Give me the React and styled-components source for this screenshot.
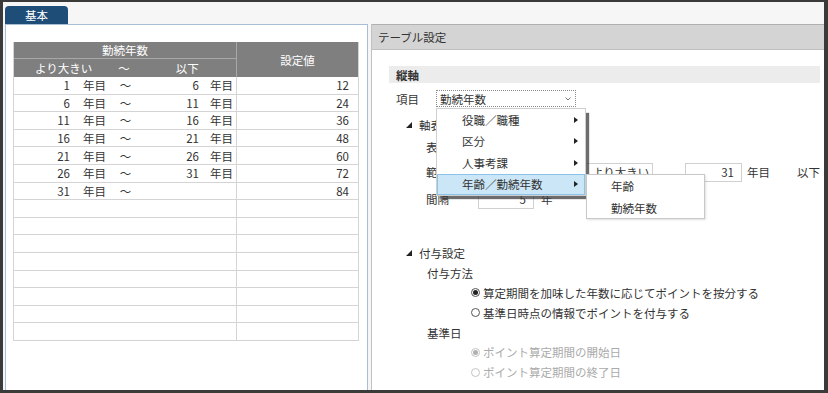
import React from 'react';
import styled, { createGlobalStyle } from 'styled-components';

const GlobalStyle = createGlobalStyle`
  html, body {
    margin: 0;
    padding: 0;
    background: #3a3a3a;
  }
  body {
    font-family: "Noto Sans CJK JP", "Noto Sans", sans-serif;
    font-size: 11.5px;
    color: #333;
  }
  * {
    box-sizing: border-box;
  }
`;

const tableRows = [
  { from: 1, to: 6, value: 12 },
  { from: 6, to: 11, value: 24 },
  { from: 11, to: 16, value: 36 },
  { from: 16, to: 21, value: 48 },
  { from: 21, to: 26, value: 60 },
  { from: 26, to: 31, value: 72 },
  { from: 31, to: null, value: 84 },
];
const EMPTY_ROWS = 8;

const menuItems = ['役職／職種', '区分', '人事考課', '年齢／勤続年数'];
const subItems = ['年齢', '勤続年数'];

const TreeMark = () => (
  <svg width="6" height="6" viewBox="0 0 6 6">
    <polygon points="6,0 6,6 0,6" fill="#222" />
  </svg>
);

const ArrowRight = () => (
  <svg width="4" height="6" viewBox="0 0 4 6">
    <polygon points="0,0 4,3 0,6" fill="#222" />
  </svg>
);

const Chevron = () => (
  <svg width="6" height="4" viewBox="0 0 6 4">
    <polyline points="0.5,0.5 3,3 5.5,0.5" fill="none" stroke="#777" strokeWidth="1" />
  </svg>
);

const App = () => {
  return (
    <>
      <GlobalStyle />
      <Frame>
        <TabStrip>
          <Tab>基本</Tab>
        </TabStrip>
        <Main>
          <LeftPanel>
            <Grid>
              <HeadTop>勤続年数</HeadTop>
              <HeadValue>設定値</HeadValue>
              <HeadSub>
                <SubLabel $ml={21}>より大きい</SubLabel>
                <SubLabel $ml={26}>～</SubLabel>
                <SubLabel $ml={46}>以下</SubLabel>
              </HeadSub>
              {tableRows.map((r, i) => (
                <React.Fragment key={i}>
                  <RangeCell>
                    <Num $w={56}>{r.from}</Num>
                    <Unit $ml={13}>年目</Unit>
                    <Tilde>～</Tilde>
                    {r.to !== null && (
                      <>
                        <Num $w={67}>{r.to}</Num>
                        <Unit $ml={11}>年目</Unit>
                      </>
                    )}
                  </RangeCell>
                  <ValueCell>{r.value}</ValueCell>
                </React.Fragment>
              ))}
              {Array.from({ length: EMPTY_ROWS }).map((_, i) => (
                <React.Fragment key={'e' + i}>
                  <RangeCell />
                  <ValueCell />
                </React.Fragment>
              ))}
            </Grid>
          </LeftPanel>

          <RightPanel>
            <PanelHeader>テーブル設定</PanelHeader>
            <Content>
              <SectionBar>縦軸</SectionBar>

              <Row $mt={7} $h={17} $indent={7}>
                <FieldLabel $w={40}>項目</FieldLabel>
                <SelectWrap>
                  <SelectBox>
                    <span>勤続年数</span>
                    <Chevron />
                  </SelectBox>
                  <Menu>
                    {menuItems.map((m, i) => (
                      <MenuItem key={m} $active={i === menuItems.length - 1}>
                        <span>{m}</span>
                        <ArrowRight />
                        {i === menuItems.length - 1 && (
                          <SubMenu>
                            {subItems.map(s => (
                              <SubItem key={s}>{s}</SubItem>
                            ))}
                          </SubMenu>
                        )}
                      </MenuItem>
                    ))}
                  </Menu>
                </SelectWrap>
              </Row>

              <Row $mt={8} $h={20} $indent={17}>
                <TreeMark />
                <TreeText>軸表示設定</TreeText>
              </Row>

              <Row $mt={2} $h={20} $indent={37}>
                <FieldLabel $w={52}>表示単位</FieldLabel>
              </Row>

              <Row $mt={5} $h={20} $indent={37}>
                <FieldLabel $w={52}>範囲</FieldLabel>
                <NumInput $w={56}>1</NumInput>
                <Text $ml={7}>年目</Text>
                <ChoiceBox $ml={19}>より大きい</ChoiceBox>
                <NumInput $w={57} $ml={32}>31</NumInput>
                <Text $ml={5}>年目</Text>
                <Text $ml={27}>以下</Text>
              </Row>

              <Row $mt={7} $h={20} $indent={37}>
                <FieldLabel $w={52}>間隔</FieldLabel>
                <NumInput $w={56}>5</NumInput>
                <Text $ml={7}>年</Text>
              </Row>

              <Row $mt={34} $h={20} $indent={17}>
                <TreeMark />
                <TreeText>付与設定</TreeText>
              </Row>

              <Row $h={20} $indent={38}>
                <Text>付与方法</Text>
              </Row>
              <Row $h={19.5} $indent={82}>
                <Radio $checked />
                <Text $ml={3}>算定期間を加味した年数に応じてポイントを按分する</Text>
              </Row>
              <Row $h={20} $indent={82}>
                <Radio />
                <Text $ml={3}>基準日時点の情報でポイントを付与する</Text>
              </Row>
              <Row $h={20} $indent={38}>
                <Text>基準日</Text>
              </Row>
              <Row $h={19.5} $indent={82}>
                <Radio $checked $disabled />
                <Text $ml={3} $disabled>ポイント算定期間の開始日</Text>
              </Row>
              <Row $h={20.5} $indent={82}>
                <Radio $disabled />
                <Text $ml={3} $disabled>ポイント算定期間の終了日</Text>
              </Row>
            </Content>
          </RightPanel>
        </Main>
      </Frame>
    </>
  );
};

export default App;

const Frame = styled.div`
  width: 828px;
  height: 393px;
  display: flex;
  flex-direction: column;
  background: #f6f6f6;
  border-style: solid;
  border-color: #3a3a3a;
  border-width: 2px 4px 3px 3px;
  overflow: hidden;
`;

const TabStrip = styled.div`
  height: 22px;
  display: flex;
  align-items: flex-end;
  padding-left: 2px;
`;

const Tab = styled.div`
  width: 63px;
  height: 18px;
  background: #1e4d78;
  color: #fff;
  border-radius: 4px 4px 0 0;
  display: flex;
  align-items: center;
  justify-content: center;
  font-size: 11.5px;
`;

const Main = styled.div`
  flex: 1;
  display: flex;
  gap: 3px;
  padding-left: 2px;
  min-height: 0;
`;

const LeftPanel = styled.div`
  width: 364px;
  background: #fff;
  border: 1px solid #a8bdd6;
  border-bottom: none;
  padding: 17px 0 0 7px;
`;

const Grid = styled.div`
  width: 346px;
  display: grid;
  grid-template-columns: 223px 121px;
  grid-template-rows: 17px 18px;
  grid-auto-rows: 17.6px;
  border-left: 1px solid #d4d4d4;
  border-right: 1px solid #d4d4d4;
`;

const HeadCell = styled.div`
  background: #7f7f7f;
  color: #fff;
  display: flex;
  align-items: center;
`;

const HeadTop = styled(HeadCell)`
  grid-column: 1;
  grid-row: 1;
  justify-content: center;
  border-right: 1px solid #a8a8a8;
  border-bottom: 1px solid #a8a8a8;
`;

const HeadValue = styled(HeadCell)`
  grid-column: 2;
  grid-row: 1 / span 2;
  justify-content: center;
`;

const HeadSub = styled(HeadCell)`
  grid-column: 1;
  grid-row: 2;
  border-right: 1px solid #a8a8a8;
`;

const SubLabel = styled.span`
  margin-left: ${p => p.$ml}px;
  white-space: nowrap;
`;

const RangeCell = styled.div`
  display: flex;
  align-items: center;
  border-right: 1px solid #d4d4d4;
  border-bottom: 1px solid #d4d4d4;
  white-space: nowrap;
`;

const ValueCell = styled.div`
  display: flex;
  align-items: center;
  justify-content: flex-end;
  padding-right: 9px;
  border-bottom: 1px solid #d4d4d4;
`;

const Num = styled.span`
  width: ${p => p.$w}px;
  text-align: right;
`;

const Unit = styled.span`
  margin-left: ${p => p.$ml}px;
`;

const Tilde = styled.span`
  margin-left: 13px;
  width: 13px;
  text-align: center;
`;

const RightPanel = styled.div`
  flex: 1;
  background: #fff;
  border-left: 1px solid #c2c2c2;
  display: flex;
  flex-direction: column;
`;

const PanelHeader = styled.div`
  height: 26px;
  background: #d4d4d4;
  border-top: 1px solid #b0b0b0;
  border-bottom: 1px solid #c0c0c0;
  display: flex;
  align-items: center;
  padding-left: 6px;
  font-size: 11.5px;
  color: #333;
`;

const Content = styled.div`
  padding: 16px 4px 0 17px;
`;

const SectionBar = styled.div`
  height: 17px;
  background: #ececec;
  display: flex;
  align-items: center;
  padding-left: 7px;
  font-weight: bold;
`;

const Row = styled.div`
  display: flex;
  align-items: center;
  height: ${p => p.$h}px;
  margin-top: ${p => p.$mt || 0}px;
  padding-left: ${p => p.$indent}px;
  white-space: nowrap;
`;

const FieldLabel = styled.span`
  width: ${p => p.$w}px;
  overflow: hidden;
`;

const TreeText = styled.span`
  margin-left: 7px;
`;

const Text = styled.span`
  margin-left: ${p => p.$ml || 0}px;
  color: ${p => (p.$disabled ? '#aaa' : '#333')};
`;

const SelectWrap = styled.div`
  position: relative;
`;

const SelectBox = styled.div`
  width: 140px;
  height: 17px;
  border: 1px dotted #8a8a8a;
  display: flex;
  align-items: center;
  justify-content: space-between;
  padding: 0 4px 0 3px;
`;

const Menu = styled.div`
  position: absolute;
  left: 0;
  top: 18px;
  width: 150px;
  background: #fff;
  border: 1px solid #cfcfcf;
  padding: 0;
  box-shadow: 4px 4px 1px -1px rgba(60, 60, 60, 0.75);
  z-index: 10;
`;

const MenuItem = styled.div`
  position: relative;
  height: 21.5px;
  display: flex;
  align-items: center;
  justify-content: space-between;
  padding: 0 6px 0 24px;
  background: ${p => (p.$active ? '#cbe6f7' : 'transparent')};
  border: 1px solid ${p => (p.$active ? '#8cc3ea' : 'transparent')};
`;

const SubMenu = styled.div`
  position: absolute;
  left: 148px;
  top: -1px;
  width: 119px;
  height: 45px;
  background: #fff;
  border: 1px solid #c8c8c8;
  box-shadow: 1px 1px 2px rgba(0, 0, 0, 0.12);
  padding-top: 1px;
`;

const SubItem = styled.div`
  height: 21.5px;
  display: flex;
  align-items: center;
  padding-left: 24px;
`;

const NumInput = styled.div`
  width: ${p => p.$w}px;
  height: 19px;
  margin-left: ${p => p.$ml || 0}px;
  border: 1px solid #d0d0d0;
  display: flex;
  align-items: center;
  justify-content: flex-end;
  padding-right: 7px;
`;

const ChoiceBox = styled.div`
  width: 70px;
  height: 19px;
  margin-left: ${p => p.$ml}px;
  border: 1px solid #d0d0d0;
  display: flex;
  align-items: center;
  padding-left: 8px;
`;

const Radio = styled.span`
  width: 9px;
  height: 9px;
  border-radius: 50%;
  border: 1px solid ${p => (p.$disabled ? '#c4c4c4' : '#555')};
  background: #fff;
  display: inline-flex;
  align-items: center;
  justify-content: center;

  &::after {
    content: '';
    width: 5px;
    height: 5px;
    border-radius: 50%;
    background: ${p => (p.$disabled ? '#b0b0b0' : '#222')};
    display: ${p => (p.$checked ? 'block' : 'none')};
  }
`;
